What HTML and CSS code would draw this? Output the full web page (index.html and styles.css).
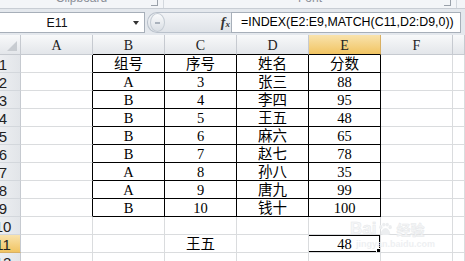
FILE: index.html
```html
<!DOCTYPE html>
<html>
<head>
  <title>INDEX MATCH</title>
  <link rel="stylesheet" href="styles.css">
</head>
<body>
  <div class="ribbon">
    <div class="group group-clip"><span class="glabel">Clipboard</span><span class="launcher"></span></div>
    <div class="group group-font"><span class="glabel">Font</span><span class="launcher"></span></div>
  </div>

  <div class="fbar">
    <div class="namebox"><span class="ref">E11</span><span class="drop"><i class="arrow"></i></span></div>
    <div class="pill"><span class="knob"><i></i></span><span class="fx">f<small>x</small></span></div>
    <div class="formula">=INDEX(E2:E9,MATCH(C11,D2:D9,0))</div>
  </div>

  <table class="sheet">
    <colgroup>
      <col class="c-rh"><col class="c"><col class="c"><col class="c"><col class="c"><col class="c"><col class="c"><col>
    </colgroup>
    <tr class="hdr">
      <th class="corner"><i class="tri"></i></th>
      <th>A</th><th class="tt">B</th><th class="tt">C</th><th class="tt">D</th><th class="tt on">E</th><th>F</th><th></th>
    </tr>
    <tr><th class="rh">1</th><td class="tl"></td><td class="t">组号</td><td class="t">序号</td><td class="t">姓名</td><td class="t">分数</td><td></td><td></td></tr>
    <tr><th class="rh">2</th><td class="tl"></td><td class="t">A</td><td class="t">3</td><td class="t">张三</td><td class="t">88</td><td></td><td></td></tr>
    <tr><th class="rh">3</th><td class="tl"></td><td class="t">B</td><td class="t">4</td><td class="t">李四</td><td class="t">95</td><td></td><td></td></tr>
    <tr><th class="rh">4</th><td class="tl"></td><td class="t">B</td><td class="t">5</td><td class="t">王五</td><td class="t">48</td><td></td><td></td></tr>
    <tr><th class="rh">5</th><td class="tl"></td><td class="t">B</td><td class="t">6</td><td class="t">麻六</td><td class="t">65</td><td></td><td></td></tr>
    <tr><th class="rh">6</th><td class="tl"></td><td class="t">B</td><td class="t">7</td><td class="t">赵七</td><td class="t">78</td><td></td><td></td></tr>
    <tr><th class="rh">7</th><td class="tl"></td><td class="t">A</td><td class="t">8</td><td class="t">孙八</td><td class="t">35</td><td></td><td></td></tr>
    <tr><th class="rh">8</th><td class="tl"></td><td class="t">A</td><td class="t">9</td><td class="t">唐九</td><td class="t">99</td><td></td><td></td></tr>
    <tr><th class="rh">9</th><td class="tl"></td><td class="t">B</td><td class="t">10</td><td class="t">钱十</td><td class="t">100</td><td></td><td></td></tr>
    <tr><th class="rh">10</th><td></td><td></td><td></td><td></td><td></td><td></td><td></td></tr>
    <tr><th class="rh on">11</th><td></td><td></td><td>王五</td><td></td><td class="sel">48</td><td></td><td></td></tr>
    <tr><th class="rh">12</th><td></td><td></td><td></td><td></td><td></td><td></td><td></td></tr>
  </table>

  <div class="wm">
    <div class="wm-logo">Bai<svg class="paw" width="15" height="14" viewBox="0 0 16 14"><ellipse cx="3" cy="5" rx="1.8" ry="2.2"/><ellipse cx="6.2" cy="2.3" rx="1.8" ry="2.1"/><ellipse cx="9.8" cy="2.3" rx="1.8" ry="2.1"/><ellipse cx="13" cy="5" rx="1.8" ry="2.2"/><path d="M8 6c-2.5 0-5 3.6-5 5.6 0 1.6 2 1.9 5 1.9s5-.3 5-1.9C13 9.6 10.5 6 8 6z"/></svg><span class="wm-cn">经验</span></div>
    <div class="wm-url">jingyan.baidu.com</div>
  </div>
</body>
</html>
```

FILE: styles.css
```css
body { margin: 0; width: 465px; height: 261px; overflow: hidden; position: relative; background: #fff; font-family: "Liberation Sans", Arial, sans-serif; }

/* ribbon edge */
.ribbon { height: 8px; background: #f3f5f8; border-bottom: 1px solid #c8cdd4; display: flex; overflow: hidden; }
.group { position: relative; border-right: 1px solid #d3d8de; display: flex; justify-content: center; }
.group-clip { width: 163px; }
.group-font { width: 292px; }
.glabel { font-size: 12px; line-height: 12px; margin-top: -8px; color: #8b9099; }
.launcher { position: absolute; right: 5px; top: 0; width: 6px; height: 5px; border-right: 1px solid #9aa1aa; border-bottom: 1px solid #9aa1aa; }

/* formula bar */
.fbar { height: 26px; box-sizing: border-box; padding: 3px 4px 2px 0; display: flex; background: #e4e8ed; }
.namebox { width: 145px; box-sizing: border-box; background: #fff; border: 1px solid #a7afb9; border-left: none; display: flex; align-items: center; font-size: 12.4px; color: #111; }
.ref { width: 114px; text-align: center; }
.drop { flex: 1; display: flex; justify-content: flex-end; padding-right: 5px; }
.arrow { width: 0; height: 0; border-top: 4px solid #333; border-left: 3.5px solid transparent; border-right: 3.5px solid transparent; }
.pill { width: 84px; margin-left: 2px; box-sizing: border-box; border: 1px solid #b9c1cb; border-right: none; border-radius: 10px 0 0 10px; background: linear-gradient(#f1f3f6, #dfe3e8); display: flex; align-items: center; justify-content: space-between; padding: 0 1px 0 2px; }
.knob { width: 13px; height: 17px; border-radius: 50%; background: linear-gradient(#fafbfc, #d9dee4); border: 1px solid #c4cbd3; display: flex; align-items: center; justify-content: center; }
.knob i { width: 5px; height: 2px; background: #aab2bc; }
.fx { font-family: "Liberation Serif", serif; font-style: italic; font-weight: bold; font-size: 14px; color: #333; }
.fx small { font-size: 9px; }
.formula { flex: 1; background: #fff; border: 1px solid #a7afb9; padding-left: 9px; font-size: 12.4px; line-height: 19px; color: #000; white-space: nowrap; overflow: hidden; }

/* grid */
.sheet { border-collapse: separate; border-spacing: 0; table-layout: fixed; width: 465px; }
.c-rh { width: 21px; }
.c { width: 72px; }
.sheet th, .sheet td { padding: 0; box-sizing: border-box; overflow: hidden; white-space: nowrap; }
.hdr th { height: 20px; background: linear-gradient(#f8f9fa, #e3e6ea); border-right: 1px solid #c6cad0; border-bottom: 1px solid #c6cad0; font-family: "Liberation Serif", serif; font-weight: normal; font-size: 14px; color: #222; padding-top: 2px; }
.hdr th.tt { border-bottom-color: #000; }
.hdr th.on { background: linear-gradient(#f9e3ad, #f1c462); border-right-color: #d9b062; }
.corner { position: relative; }
.tri { position: absolute; right: 3px; bottom: 3px; width: 0; height: 0; border-left: 10px solid transparent; border-bottom: 10px solid #c8ccd1; }

.rh { height: 18px; background: linear-gradient(90deg, #eceef1, #e2e5e9); border-right: 1px solid #c6cad0; border-bottom: 1px solid #d3d7dc; font-size: 15px; font-weight: normal; color: #222; text-align: center; text-indent: -14px; padding-top: 2px !important; line-height: 15px; }
.rh.on { background: linear-gradient(#f9e3ad, #f1c462); border-bottom-color: #d9b062; }

.sheet td { height: 18px; border-right: 1px solid #dadcde; border-bottom: 1px solid #dadcde; font-family: "Liberation Serif", "Noto Sans CJK SC", serif; font-size: 14.5px; line-height: 15px; padding-top: 2px; text-align: center; color: #000; }
.sheet td.t { border-right-color: #000; border-bottom-color: #000; }
.sheet td.tl { border-right-color: #000; }
.sheet td.sel { position: relative; }
.sel::after { content: ""; position: absolute; left: -2px; top: -1px; right: -1px; bottom: -1px; border: 2px solid #000; }
.sel::before { content: ""; position: absolute; right: -3px; bottom: -3px; width: 5px; height: 5px; background: #000; border: 1px solid #fff; z-index: 1; }

/* watermark */
.wm { position: absolute; left: 350px; top: 221px; color: #f6f7f8; pointer-events: none; }
.wm-logo { display: flex; align-items: center; height: 15px; font-weight: bold; font-size: 17px; -webkit-text-stroke: 0.5px #e6e8ea; }
.paw { fill: #eceef0; margin-left: 2px; }
.wm-cn { font-family: "Noto Sans CJK SC", sans-serif; font-size: 14px; margin-left: 3px; }
.wm-url { font-size: 9px; font-weight: bold; margin: 3px 0 0 6px; color: #eef0f2; -webkit-text-stroke: 0; }
```
